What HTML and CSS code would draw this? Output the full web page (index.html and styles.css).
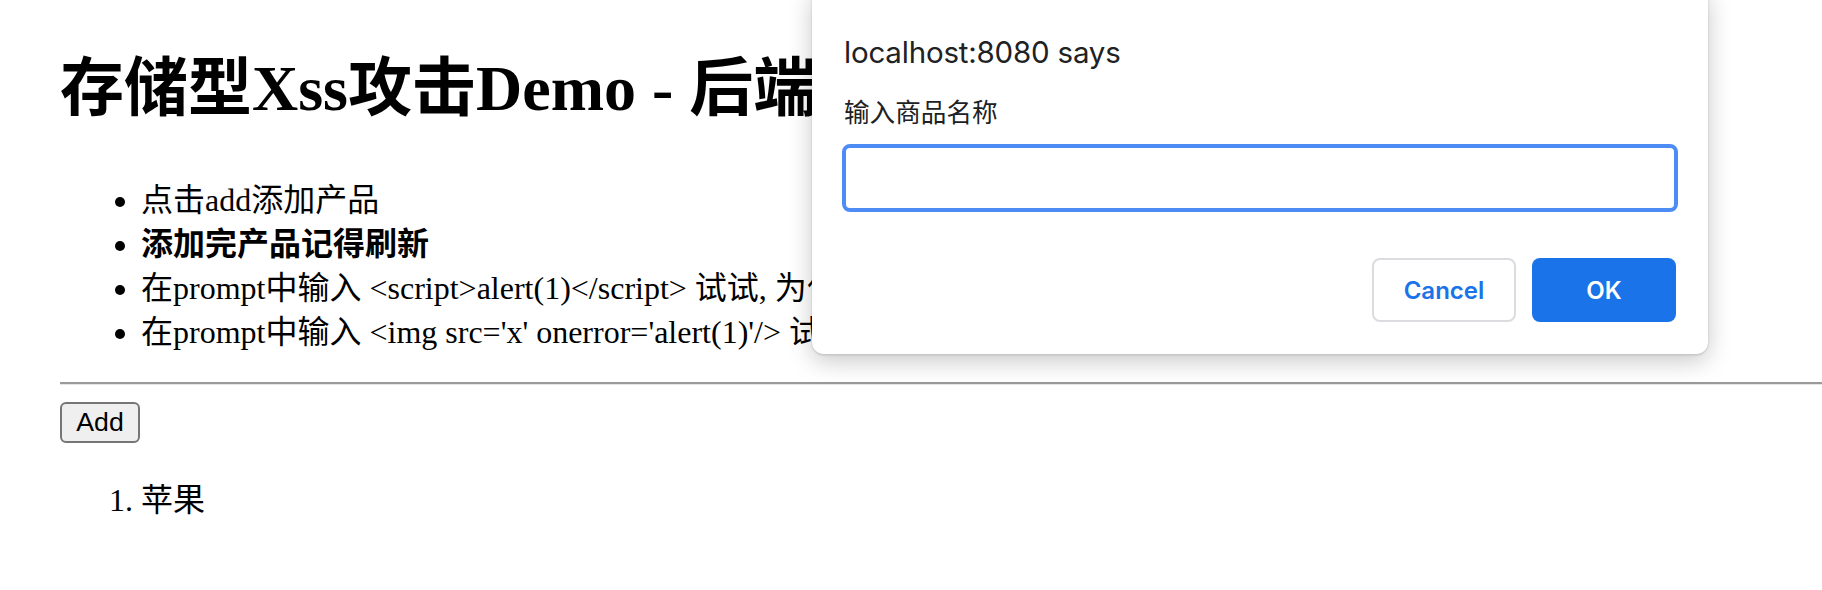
FILE: index.html
```html
<!DOCTYPE html>
<html lang="zh-CN">
<head>
<meta charset="utf-8">
<title>存储型Xss攻击Demo</title>
<link rel="stylesheet" href="styles.css">
</head>
<body>
<div class="page">
  <h1 class="title">存储型Xss攻击Demo - 后端渲染</h1>
  <ul class="tips">
    <li>点击add添加产品</li>
    <li><strong>添加完产品记得刷新</strong></li>
    <li>在prompt中输入 &lt;script&gt;alert(1)&lt;/script&gt; 试试, 为什么没有弹窗?</li>
    <li>在prompt中输入 &lt;img src='x' onerror='alert(1)'/&gt; 试试</li>
  </ul>
  <hr class="rule">
  <button class="add-btn" type="button">Add</button>
  <ol class="products">
    <li>苹果</li>
  </ol>
</div>

<div class="dialog">
  <div class="dialog-title">localhost:8080 says</div>
  <div class="dialog-msg">输入商品名称</div>
  <div class="dialog-input"></div>
  <div class="dialog-actions">
    <button class="btn btn-cancel" type="button">Cancel</button>
    <button class="btn btn-ok" type="button">OK</button>
  </div>
</div>
</body>
</html>
```

FILE: styles.css
```css
html, body {
  margin: 0;
  padding: 0;
  background: #ffffff;
}

body {
  font-family: "Liberation Serif", "Noto Sans CJK SC", serif;
  color: #000;
  overflow: hidden;
  width: 1822px;
  height: 590px;
  position: relative;
}

.page {
  padding: 45px 0 0 60px;
}

.title {
  margin: 0;
  font-size: 64px;
  line-height: 88px;
  font-weight: bold;
  white-space: nowrap;
}

.tips {
  margin: 45px 0 0 0;
  padding-left: 81px;
  font-size: 32px;
  line-height: 44px;
  white-space: nowrap;
}

.tips strong {
  font-weight: 600;
}

.rule {
  margin: 28px 0 0 0;
  height: 0;
  border: none;
  border-top: 2px solid #9a9a9a;
  border-bottom: 1px solid #e6e6e6;
}

.add-btn {
  display: block;
  margin-top: 17px;
  width: 80px;
  height: 41px;
  padding: 0;
  font-family: "Liberation Sans", Arial, sans-serif;
  font-size: 26.67px;
  color: #000;
  background: #efefef;
  border: 2px solid #767676;
  border-radius: 6px;
}

.products {
  margin: 35px 0 0 0;
  padding-left: 81px;
  font-size: 32px;
  line-height: 44px;
}

/* Dialog */
.dialog {
  position: absolute;
  left: 812px;
  top: -12px;
  width: 896px;
  box-sizing: border-box;
  padding: 44px 30px 32px 30px;
  background: #fff;
  border-radius: 12px;
  border-bottom: 1px solid #c8c8c8;
  box-shadow: 0 6px 24px rgba(0, 0, 0, 0.22), 0 0 2px rgba(0, 0, 0, 0.2);
  font-family: Inter, "Noto Sans CJK SC", sans-serif;
  color: #202124;
}

.dialog-title {
  padding-left: 2px;
  font-size: 29.5px;
  line-height: 40px;
  letter-spacing: -0.2px;
}

.dialog-msg {
  margin-top: 21px;
  padding-left: 2px;
  font-family: "Noto Sans CJK SC", sans-serif;
  font-size: 25.6px;
  line-height: 36px;
}

.dialog-input {
  margin-top: 15px;
  height: 68px;
  box-sizing: border-box;
  border: 4px solid #4d8cf5;
  border-radius: 8px;
  background: #fff;
}

.dialog-actions {
  margin-top: 46px;
  display: flex;
  justify-content: flex-end;
  gap: 16px;
  padding-right: 2px;
}

.btn {
  width: 144px;
  height: 64px;
  box-sizing: border-box;
  border-radius: 8px;
  font-family: Inter, "Liberation Sans", sans-serif;
  font-size: 24px;
  font-weight: 600;
  padding: 0;
}

.btn-cancel {
  background: #fff;
  color: #1a73e8;
  border: 2px solid #dadce0;
}

.btn-ok {
  background: #1a73e8;
  color: #fff;
  border: none;
}
```
